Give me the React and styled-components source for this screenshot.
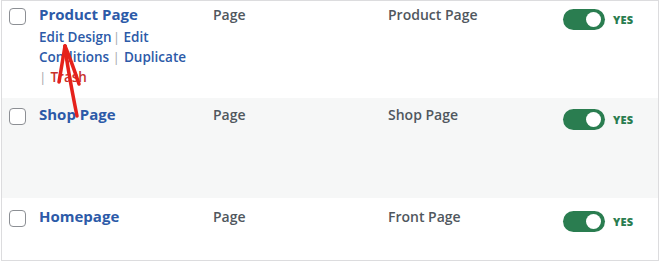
import React from 'react';
import styled, { createGlobalStyle } from 'styled-components';

const GlobalStyle = createGlobalStyle`
  body {
    margin: 0;
    font-family: "Open Sans", "Noto Sans", sans-serif;
    background: #fff;
  }
`;

const Table = styled.div`
  position: relative;
  width: 658px;
  height: 261px;
  margin-left: 1px;
  border: 1px solid #dcdcde;
  box-sizing: border-box;
  overflow: hidden;
`;

const Row = styled.div`
  display: grid;
  grid-template-columns: 31px 174px 175px 174px 1fr;
  align-items: start;
  box-sizing: border-box;
  height: ${props => props.height}px;
  padding: ${props => props.top}px 0 0 7px;
  background: ${props => (props.striped ? '#f6f7f7' : '#fff')};
`;

const Check = styled.span`
  display: block;
  width: 15px;
  height: 15px;
  margin-top: 2px;
  border: 1px solid #8c8f94;
  border-radius: 4px;
  background: #fff;
`;

const TitleCell = styled.div`
  display: flex;
  flex-direction: column;
  margin-left: -1px;
`;

const Title = styled.a`
  color: #2c5aa8;
  font-size: 15px;
  font-weight: 700;
  line-height: 17px;
  text-decoration: none;
`;

const Actions = styled.div`
  margin-top: 4px;
  width: 160px;
  font-size: 13.5px;
  font-weight: 600;
  line-height: 20px;
  color: #a7aaad;
`;

const Action = styled.a`
  color: ${props => (props.danger ? '#c8312b' : '#2c5aa8')};
  text-decoration: none;
`;

const Sep = styled.span`
  color: #a7aaad;
  font-weight: 400;
  margin: 0 ${props => (props.tight ? '0' : '4px')} 0 ${props => (props.tight ? '1px' : '0')};
`;

const Cell = styled.div`
  color: #50575e;
  font-size: 14px;
  font-weight: 600;
  line-height: 17px;
  margin-left: -1px;
`;

const StatusCell = styled.div`
  display: flex;
  align-items: center;
  gap: 8px;
  margin-top: 3px;
`;

const Toggle = styled.span`
  display: flex;
  align-items: center;
  justify-content: flex-end;
  width: 42px;
  height: 21px;
  box-sizing: border-box;
  padding-right: 4px;
  border-radius: 11px;
  background: #2a7d50;
`;

const Knob = styled.span`
  width: 15px;
  height: 15px;
  border-radius: 50%;
  background: #fff;
`;

const Yes = styled.span`
  color: #2a7d50;
  font-size: 11px;
  font-weight: 800;
  letter-spacing: 0.2px;
`;

const Arrow = styled.svg`
  position: absolute;
  left: 40px;
  top: 35px;
  pointer-events: none;
`;

const Status = () => (
  <StatusCell>
    <Toggle>
      <Knob />
    </Toggle>
    <Yes>YES</Yes>
  </StatusCell>
);

const rows = [
  { title: 'Product Page', type: 'Page', location: 'Product Page', height: 97, top: 5, actions: true },
  { title: 'Shop Page', type: 'Page', location: 'Shop Page', height: 100, top: 8, striped: true },
  { title: 'Homepage', type: 'Page', location: 'Front Page', height: 64, top: 10 },
];

const App = () => (
  <>
    <GlobalStyle />
    <Table>
      {rows.map(row => (
        <Row key={row.title} height={row.height} top={row.top} striped={row.striped}>
          <Check />
          <TitleCell>
            <Title>{row.title}</Title>
            {row.actions && (
              <Actions>
                <Action>Edit Design</Action>
                <Sep tight>|</Sep> <Action>Edit Conditions</Action> <Sep>|</Sep>
                <Action>Duplicate</Action> <Sep>|</Sep>
                <Action danger>Trash</Action>
              </Actions>
            )}
          </TitleCell>
          <Cell>{row.type}</Cell>
          <Cell>{row.location}</Cell>
          <Status />
        </Row>
      ))}
      <Arrow width="50" height="90" viewBox="0 0 50 90">
        <g fill="none" stroke="#e5211b" strokeWidth="3.5" strokeLinecap="round" strokeLinejoin="round">
          <path d="M23 10 C 25 30, 30 55, 35 80" />
          <path d="M23 10 C 21 22, 19 34, 17 46" />
          <path d="M23 10 C 28 22, 33 36, 37 48" />
        </g>
      </Arrow>
    </Table>
  </>
);

export default App;
